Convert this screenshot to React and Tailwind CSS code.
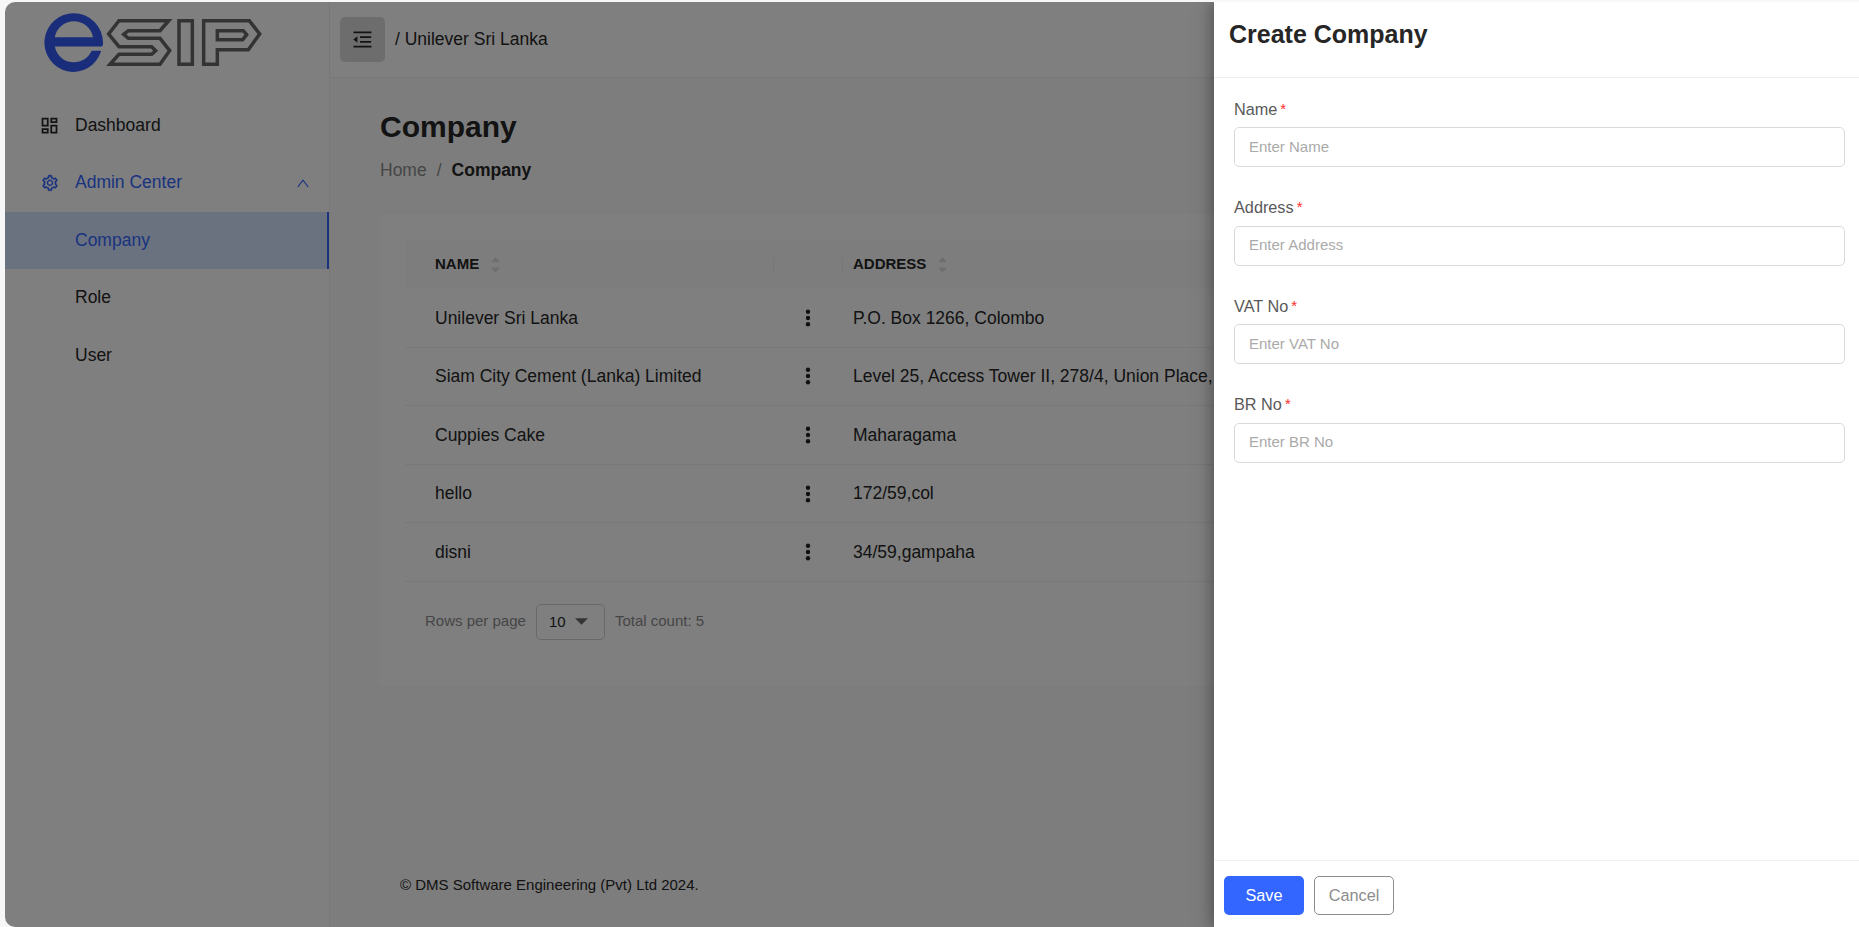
import { AiOutlineMenuFold, AiOutlineSetting } from "react-icons/ai";
import { MdOutlineDashboard } from "react-icons/md";

const companies = [
  { name: "Unilever Sri Lanka", address: "P.O. Box 1266, Colombo" },
  { name: "Siam City Cement (Lanka) Limited", address: "Level 25, Access Tower II, 278/4, Union Place," },
  { name: "Cuppies Cake", address: "Maharagama" },
  { name: "hello", address: "172/59,col" },
  { name: "disni", address: "34/59,gampaha" },
];

const fields = ["Name", "Address", "VAT No", "BR No"];

function Logo() {
  return (
    <svg width="220" height="62" viewBox="0 0 220 62" fill="none" aria-label="eSIP">
      <path
        fill="#345af6"
        fillRule="evenodd"
        d="M30 1.3A29 29.3 0 1 0 57 39.6Q57.4 38.8 56.4 38.8H48.4Q47.6 38.8 47 40A19.4 19.4 0 0 1 10.8 34.6H56.6Q58.8 34.6 59 32.4V30.6A29 29.3 0 0 0 30 1.3ZM10.8 25.3A19.4 19.4 0 0 1 49 25.3Z"
      />
      <g stroke="#666666" strokeWidth="10.5" transform="translate(-44 -12) scale(0.33333)">
        <path d="M357 62H506L480 92H385L371 103L385 115H480L509 152L480 193H330L357 163H455L467 152L455 140H357L326 102Z" />
        <path d="M537 62H577V193H537Z" />
        <path d="M611 62H748L779 102L745 149H652V193H611Z" />
        <path d="M652 92H730L740 104L728 119H652Z" />
      </g>
    </svg>
  );
}

function Sorter() {
  return (
    <svg width="9" height="16" viewBox="0 0 9 16" fill="#dddddd">
      <path d="M0 5.2 4.5 0 9 5.2ZM0 10.6H9L4.5 15.8Z" />
    </svg>
  );
}

function Kebab() {
  return (
    <svg width="6" height="18" viewBox="0 0 6 18" fill="#222">
      <circle cx="3" cy="2.7" r="2.2" />
      <circle cx="3" cy="9" r="2.2" />
      <circle cx="3" cy="15.3" r="2.2" />
    </svg>
  );
}

function Sidebar() {
  return (
    <aside className="flex w-[325px] shrink-0 flex-col border-r border-[#f0f0f0] bg-white">
      <div className="h-[94.5px] pt-[10px] pl-[39px]">
        <Logo />
      </div>
      <nav className="flex flex-col text-[17.5px]">
        <div className="flex h-[57.5px] items-center pl-[34px]">
          <MdOutlineDashboard size={21} className="mt-px text-[#262626]" />
          <span className="mb-px ml-[15px]">Dashboard</span>
        </div>
        <div className="flex h-[57.5px] items-center pr-[20px] pl-[36px] text-[#3366ff]">
          <AiOutlineSetting size={18} strokeWidth={24} />
          <span className="mb-px ml-4 flex-1">Admin Center</span>
          <svg className="mt-px" width="12" height="9" viewBox="0 0 12 9" fill="none" stroke="currentColor" strokeWidth="1.2">
            <path d="M0.8 8 6 1.2 11.2 8" />
          </svg>
        </div>
        <div className="flex h-[57.5px] items-center border-r-2 border-[#3366ff] bg-[#d6e4ff] pb-px pl-[70px] text-[#3366ff]">Company</div>
        <div className="flex h-[57.5px] items-center pb-px pl-[70px]">Role</div>
        <div className="flex h-[57.5px] items-center pb-px pl-[70px]">User</div>
      </nav>
    </aside>
  );
}

function CompanyTable() {
  return (
    <section className="mt-[31px] h-[472px] rounded-[5px] bg-white pt-[26px] pl-[25px]">
      <div className="flex h-[49px] items-center bg-[#fafafa] text-[15px] font-bold">
        <div className="flex w-[368px] items-center gap-3 pl-[30px]">
          NAME <Sorter />
        </div>
        <div className="mt-0.5 flex h-[13px] w-[70px] border-x border-[#ededed]" />
        <div className="flex items-center gap-3 pl-[10px]">
          ADDRESS <Sorter />
        </div>
      </div>
      {companies.map((c) => (
        <div key={c.name} className="flex h-[58.6px] items-center border-b border-[#f0f0f0] text-[17.5px]">
          <div className="w-[400px] pl-[30px]">{c.name}</div>
          <div className="w-[48px]">
            <Kebab />
          </div>
          <div className="whitespace-nowrap">{c.address}</div>
        </div>
      ))}
      <div className="mt-[22px] flex h-9 items-center pl-5 text-[15px] text-[#8c8c8c]">
        <span className="mb-0.5">Rows per page</span>
        <div className="ml-[10px] flex h-9 w-[69px] items-center gap-[9px] rounded-[5px] border border-[#d0d0d0] pl-3 text-[#262626]">
          10
          <svg width="13" height="7" viewBox="0 0 13 7" fill="#6a6a6a">
            <path d="M0 0.2H13L6.5 6.8Z" />
          </svg>
        </div>
        <span className="mb-0.5 ml-[10px]">Total count: 5</span>
      </div>
    </section>
  );
}

function Drawer() {
  return (
    <div className="absolute inset-y-0 right-0 flex w-[645px] flex-col bg-white shadow-[-7px_0_20px_0_rgba(0,0,0,0.12),-3px_0_10px_0_rgba(0,0,0,0.2)]">
      <header className="h-[76px] shrink-0 border-b border-[#f0f0f0] pt-[17px] pl-[15px] text-[25px] leading-[30px] font-bold text-[#262626]">
        Create Company
      </header>
      <form className="flex flex-1 flex-col pt-[19px] pr-[14px] pl-5">
        {fields.map((f) => (
          <div key={f} className="h-[98.5px]">
            <label className="flex h-[30px] items-center pb-1.5 text-[16.25px] text-[#595959]">
              {f}
              <span className="ml-[3px] text-[15px] text-[#ff2a2a]">*</span>
            </label>
            <input
              className="block h-10 w-full rounded-[5px] border border-[#d9d9d9] px-[14px] pb-0.5 text-[15px] outline-none placeholder:text-[#aaaaaa]"
              placeholder={`Enter ${f}`}
            />
          </div>
        ))}
      </form>
      <footer className="flex h-[67px] shrink-0 gap-[10px] border-t border-[#f0f0f0] pt-[15px] pl-[10px] text-[16.25px]">
        <button type="button" className="h-[39px] w-20 rounded-[5px] bg-[#3366ff] text-white">Save</button>
        <button type="button" className="h-[39px] w-20 rounded-[5px] border border-[#8c8c8c] text-[#8c8c8c]">Cancel</button>
      </footer>
    </div>
  );
}

export default function App() {
  return (
    <div className="h-[927px] w-[1859px] overflow-hidden bg-[#f7f7f7] pt-[2px] pl-[5px] font-['Liberation_Sans',Arial,sans-serif] text-[#262626]">
      <div className="relative flex h-[925px] overflow-hidden rounded-l-[10px]">
        <Sidebar />
        <div className="flex flex-1 flex-col overflow-hidden bg-[#fafafb]">
          <header className="flex h-[76px] shrink-0 items-center border-b border-[#f0f0f0] bg-white pl-[10px] text-[17.5px]">
            <div className="flex size-[45px] items-center justify-center rounded-[5px] bg-[#dadada]">
              <AiOutlineMenuFold size={23} />
            </div>
            <span className="ml-[10px]">/ Unilever Sri Lanka</span>
          </header>
          <main className="flex-1 pt-[29px] pl-[50px]">
            <h1 className="pt-px text-[30px] leading-[38px] font-bold">Company</h1>
            <div className="mt-[10px] flex h-[27px] items-center text-[17.5px]">
              <span className="mt-0.5 text-[#8c8c8c]">Home</span>
              <span className="mx-[10px] mt-0.5 text-[#8c8c8c]">/</span>
              <span className="mt-0.5 font-bold">Company</span>
            </div>
            <CompanyTable />
          </main>
          <footer className="h-[53px] pl-[70px] text-[15px]">© DMS Software Engineering (Pvt) Ltd 2024.</footer>
        </div>
        <div className="absolute inset-0 bg-black/50" />
        <Drawer />
      </div>
    </div>
  );
}
